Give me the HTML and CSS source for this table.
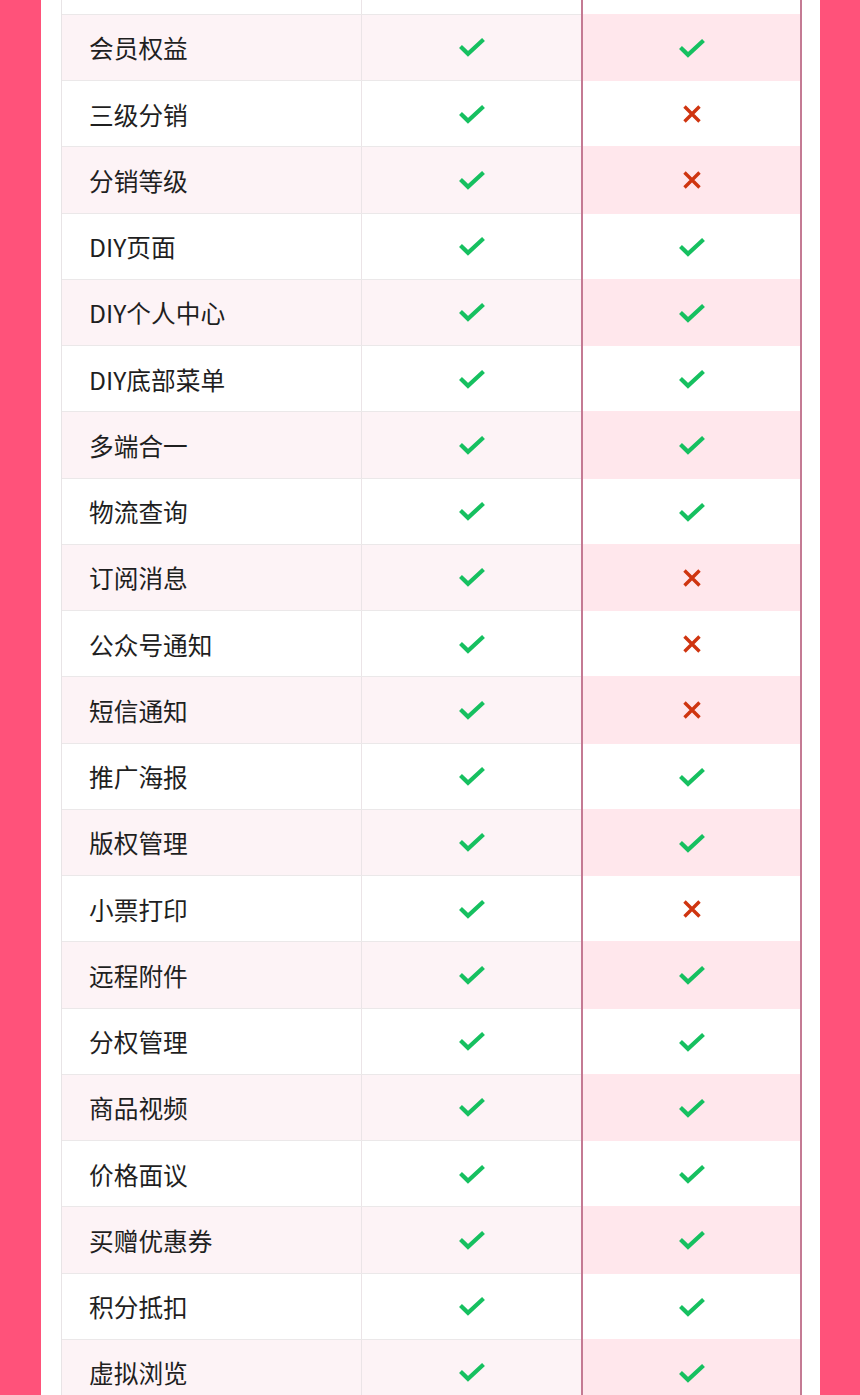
FILE: index.html
```html
<!DOCTYPE html>
<html lang="zh-CN">
<head>
<meta charset="utf-8">
<title>功能对比</title>
<link rel="stylesheet" href="styles.css">
</head>
<body>
<svg width="0" height="0" class="defs" aria-hidden="true">
  <defs>
    <symbol id="ok" viewBox="0 0 28 20"><polyline points="2.5,9.5 10,16.8 25.5,2.5" fill="none" stroke="#16c060" stroke-width="4.2"/></symbol>
    <symbol id="no" viewBox="0 0 20 20"><path d="M2.5 2.5 L17.5 17.5 M17.5 2.5 L2.5 17.5" fill="none" stroke="#cf3510" stroke-width="3.4"/></symbol>
  </defs>
</svg>
<div class="page">
  <div class="sheet">
    <div class="table">
      <div class="row"><div class="name"></div><div class="cell"><svg class="ok"><use href="#ok"/></svg></div><div class="cell hl"><svg class="ok"><use href="#ok"/></svg></div></div>
      <div class="row alt"><div class="name">会员权益</div><div class="cell"><svg class="ok"><use href="#ok"/></svg></div><div class="cell hl"><svg class="ok"><use href="#ok"/></svg></div></div>
      <div class="row"><div class="name">三级分销</div><div class="cell"><svg class="ok"><use href="#ok"/></svg></div><div class="cell hl"><svg class="no"><use href="#no"/></svg></div></div>
      <div class="row alt"><div class="name">分销等级</div><div class="cell"><svg class="ok"><use href="#ok"/></svg></div><div class="cell hl"><svg class="no"><use href="#no"/></svg></div></div>
      <div class="row"><div class="name">DIY页面</div><div class="cell"><svg class="ok"><use href="#ok"/></svg></div><div class="cell hl"><svg class="ok"><use href="#ok"/></svg></div></div>
      <div class="row alt"><div class="name">DIY个人中心</div><div class="cell"><svg class="ok"><use href="#ok"/></svg></div><div class="cell hl"><svg class="ok"><use href="#ok"/></svg></div></div>
      <div class="row"><div class="name">DIY底部菜单</div><div class="cell"><svg class="ok"><use href="#ok"/></svg></div><div class="cell hl"><svg class="ok"><use href="#ok"/></svg></div></div>
      <div class="row alt"><div class="name">多端合一</div><div class="cell"><svg class="ok"><use href="#ok"/></svg></div><div class="cell hl"><svg class="ok"><use href="#ok"/></svg></div></div>
      <div class="row"><div class="name">物流查询</div><div class="cell"><svg class="ok"><use href="#ok"/></svg></div><div class="cell hl"><svg class="ok"><use href="#ok"/></svg></div></div>
      <div class="row alt"><div class="name">订阅消息</div><div class="cell"><svg class="ok"><use href="#ok"/></svg></div><div class="cell hl"><svg class="no"><use href="#no"/></svg></div></div>
      <div class="row"><div class="name">公众号通知</div><div class="cell"><svg class="ok"><use href="#ok"/></svg></div><div class="cell hl"><svg class="no"><use href="#no"/></svg></div></div>
      <div class="row alt"><div class="name">短信通知</div><div class="cell"><svg class="ok"><use href="#ok"/></svg></div><div class="cell hl"><svg class="no"><use href="#no"/></svg></div></div>
      <div class="row"><div class="name">推广海报</div><div class="cell"><svg class="ok"><use href="#ok"/></svg></div><div class="cell hl"><svg class="ok"><use href="#ok"/></svg></div></div>
      <div class="row alt"><div class="name">版权管理</div><div class="cell"><svg class="ok"><use href="#ok"/></svg></div><div class="cell hl"><svg class="ok"><use href="#ok"/></svg></div></div>
      <div class="row"><div class="name">小票打印</div><div class="cell"><svg class="ok"><use href="#ok"/></svg></div><div class="cell hl"><svg class="no"><use href="#no"/></svg></div></div>
      <div class="row alt"><div class="name">远程附件</div><div class="cell"><svg class="ok"><use href="#ok"/></svg></div><div class="cell hl"><svg class="ok"><use href="#ok"/></svg></div></div>
      <div class="row"><div class="name">分权管理</div><div class="cell"><svg class="ok"><use href="#ok"/></svg></div><div class="cell hl"><svg class="ok"><use href="#ok"/></svg></div></div>
      <div class="row alt"><div class="name">商品视频</div><div class="cell"><svg class="ok"><use href="#ok"/></svg></div><div class="cell hl"><svg class="ok"><use href="#ok"/></svg></div></div>
      <div class="row"><div class="name">价格面议</div><div class="cell"><svg class="ok"><use href="#ok"/></svg></div><div class="cell hl"><svg class="ok"><use href="#ok"/></svg></div></div>
      <div class="row alt"><div class="name">买赠优惠券</div><div class="cell"><svg class="ok"><use href="#ok"/></svg></div><div class="cell hl"><svg class="ok"><use href="#ok"/></svg></div></div>
      <div class="row"><div class="name">积分抵扣</div><div class="cell"><svg class="ok"><use href="#ok"/></svg></div><div class="cell hl"><svg class="ok"><use href="#ok"/></svg></div></div>
      <div class="row alt"><div class="name">虚拟浏览</div><div class="cell"><svg class="ok"><use href="#ok"/></svg></div><div class="cell hl"><svg class="ok"><use href="#ok"/></svg></div></div>
    </div>
  </div>
</div>
</body>
</html>
```

FILE: styles.css
```css
html, body {
  margin: 0;
  padding: 0;
}
body {
  background: #ff527a;
  font-family: "Noto Sans CJK SC", "Noto Sans", sans-serif;
  overflow: hidden;
}
.defs {
  position: absolute;
}
.page {
  display: flex;
  justify-content: flex-start;
  padding-left: 41px;
}
.sheet {
  width: 779px;
  background: #ffffff;
  padding: 0 20px;
  box-sizing: border-box;
}
.table {
  margin-top: -51.5px;
  border-left: 1px solid #e8e4e6;
}
.row {
  display: grid;
  grid-template-columns: 300px 219px 221px;
  height: 66.25px;
  box-sizing: border-box;
  border-bottom: 1px solid #ebe8e9;
  background: #ffffff;
}
.row.alt {
  background: #fdf3f6;
}
.name {
  display: flex;
  align-items: center;
  padding-left: 27px;
  font-size: 24.7px;
  color: #1f1f1f;
  border-right: 1px solid #ebe4e7;
}
.cell {
  display: flex;
  align-items: center;
  justify-content: center;
}
.cell.hl {
  border-left: 2px solid #c47a93;
  border-right: 2px solid #c47a93;
  margin-top: -1px;
  margin-bottom: -1px;
  padding-top: 1px;
}
.row.alt .cell.hl {
  background: #ffe7ec;
}
.ok {
  width: 28px;
  height: 20px;
}
.no {
  width: 20px;
  height: 20px;
}
```
